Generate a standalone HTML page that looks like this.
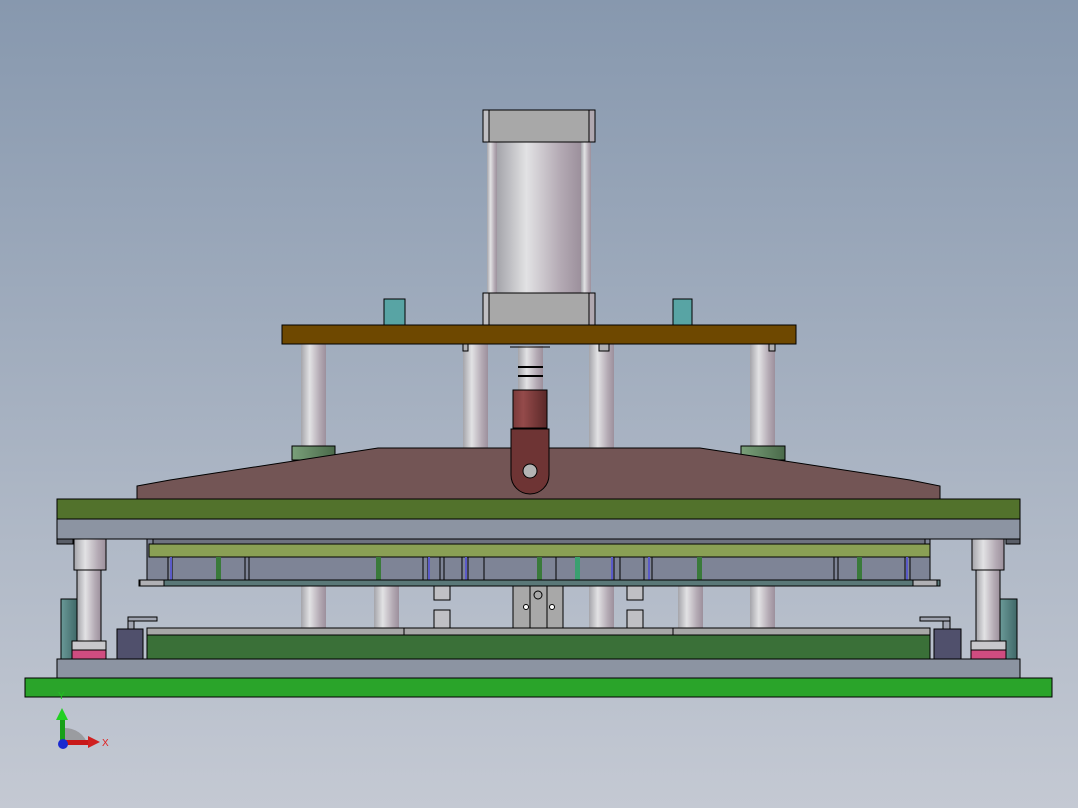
<!DOCTYPE html>
<html><head><style>html,body{margin:0;padding:0;width:1078px;height:808px;overflow:hidden}</style></head>
<body>
<svg width="1078" height="808" viewBox="0 0 1078 808" xmlns="http://www.w3.org/2000/svg" font-family="Liberation Sans, sans-serif">
<defs>
<linearGradient id="bg" x1="0" y1="0" x2="0" y2="1">
<stop offset="0" stop-color="#8798ae"/><stop offset="1" stop-color="#c4c9d3"/></linearGradient>
<linearGradient id="col" x1="0" y1="0" x2="1" y2="0">
<stop offset="0" stop-color="#a4a4aa"/><stop offset="0.35" stop-color="#e2e2e4"/><stop offset="0.75" stop-color="#b4aab4"/><stop offset="1" stop-color="#9c909c"/></linearGradient>
<linearGradient id="red" x1="0" y1="0" x2="1" y2="0">
<stop offset="0" stop-color="#7a3a3a"/><stop offset="0.3" stop-color="#944a4a"/><stop offset="1" stop-color="#5a2828"/></linearGradient>
<linearGradient id="gb" x1="0" y1="0" x2="1" y2="0">
<stop offset="0" stop-color="#7aa07a"/><stop offset="1" stop-color="#4a6a4a"/></linearGradient>
<linearGradient id="tl" x1="0" y1="0" x2="1" y2="0">
<stop offset="0" stop-color="#6a9a98"/><stop offset="1" stop-color="#406868"/></linearGradient>
</defs>
<rect width="1078" height="808" fill="url(#bg)"/>
<g stroke="#000" stroke-width="1">
<rect x="301" y="344" width="25" height="110" fill="url(#col)" stroke="none"/>
<rect x="463" y="344" width="25" height="110" fill="url(#col)" stroke="none"/>
<rect x="589" y="344" width="25" height="110" fill="url(#col)" stroke="none"/>
<rect x="750" y="344" width="25" height="110" fill="url(#col)" stroke="none"/>
<rect x="487" y="142" width="10" height="151" fill="url(#col)" stroke="none"/>
<rect x="581" y="142" width="10" height="151" fill="url(#col)" stroke="none"/>
<rect x="497" y="142" width="84" height="151" fill="url(#col)" stroke="none"/>
<rect x="483" y="110" width="112" height="32" fill="#a8a8a8"/>
<rect x="483" y="110" width="6" height="32" fill="#c0c0c4"/>
<rect x="589" y="110" width="6" height="32" fill="#b0a8b0"/>
<rect x="483" y="293" width="112" height="32" fill="#a8a8a8"/>
<rect x="483" y="293" width="6" height="32" fill="#c0c0c4"/>
<rect x="589" y="293" width="6" height="32" fill="#b0a8b0"/>
<rect x="384" y="299" width="21" height="26" fill="#58a4a4"/>
<rect x="673" y="299" width="19" height="26" fill="#58a4a4"/>
<rect x="518" y="346" width="25" height="44" fill="url(#col)" stroke="none"/>
<line x1="510" y1="347" x2="550" y2="347"/>
<line x1="518" y1="367" x2="543" y2="367" stroke-width="2"/>
<line x1="518" y1="376" x2="543" y2="376" stroke-width="2"/>
<rect x="513" y="390" width="34" height="38" fill="url(#red)"/>
<rect x="282" y="325" width="514" height="19" fill="#6e4800"/>
<rect x="463" y="344" width="5" height="7" fill="#b0b0b4"/>
<rect x="599" y="344" width="10" height="7" fill="#b0b0b4"/>
<rect x="769" y="344" width="6" height="7" fill="#b0b0b4"/>
<rect x="292" y="446" width="43" height="14" fill="url(#gb)"/>
<rect x="741" y="446" width="44" height="14" fill="url(#gb)"/>
<polygon points="137,486 170,480 378,448 700,448 910,480 940,486 940,499 137,499" fill="#735555"/>
<path d="M511,429 H549 V475 A19,19 0 0 1 511,475 Z" fill="#6e3434"/>
<circle cx="530" cy="471" r="7" fill="#b4b4b4"/>
<g stroke="none">
<rect x="301" y="586" width="25" height="42" fill="url(#col)"/>
<rect x="374" y="586" width="25" height="42" fill="url(#col)"/>
<rect x="589" y="586" width="25" height="42" fill="url(#col)"/>
<rect x="678" y="586" width="25" height="42" fill="url(#col)"/>
<rect x="750" y="586" width="25" height="42" fill="url(#col)"/>
</g>
<rect x="61" y="599" width="16" height="60" fill="url(#tl)"/>
<rect x="1000" y="599" width="17" height="60" fill="url(#tl)"/>
<rect x="77" y="570" width="24" height="71" fill="url(#col)"/>
<rect x="74" y="539" width="32" height="31" fill="url(#col)"/>
<rect x="72" y="641" width="34" height="9" fill="#c8c8cc"/>
<rect x="72" y="650" width="34" height="9" fill="#d04c80"/>
<rect x="976" y="570" width="24" height="71" fill="url(#col)"/>
<rect x="972" y="539" width="32" height="31" fill="url(#col)"/>
<rect x="971" y="641" width="35" height="9" fill="#c8c8cc"/>
<rect x="971" y="650" width="35" height="9" fill="#d04c80"/>
<rect x="128" y="617" width="29" height="4" fill="#a0a4b0"/>
<rect x="128" y="621" width="6" height="8" fill="#a0a4b0"/>
<rect x="117" y="629" width="26" height="30" fill="#50506c"/>
<rect x="920" y="617" width="30" height="4" fill="#a0a4b0"/>
<rect x="943" y="621" width="7" height="8" fill="#a0a4b0"/>
<rect x="934" y="629" width="27" height="30" fill="#50506c"/>
<rect x="57" y="499" width="963" height="20" fill="#52722c"/>
<rect x="57" y="519" width="963" height="20" fill="#8c94a2"/>
<rect x="57" y="539" width="16" height="5" fill="#5a5e68"/>
<rect x="1006" y="539" width="14" height="5" fill="#5a5e68"/>
<rect x="147" y="539" width="783" height="46" fill="#7e8496"/>
<rect x="153" y="539" width="772" height="5" fill="#6e7280"/>
<rect x="149" y="544" width="781" height="13" fill="#8aa055"/>
</g>
<g stroke="#000" stroke-width="1" fill="none">
<path d="M168 557V580M172 557V580M245 557V580M249 557V580M423 557V580M428 557V580M440 557V580M444 557V580M462 557V580M468 557V580M484 557V580M556 557V580M614 557V580M620 557V580M644 557V580M652 557V580M834 557V580M838 557V580M905 557V580M910 557V580"/>
</g>
<g stroke="none">
<rect x="216" y="557" width="5" height="23" fill="#3a7a3a"/>
<rect x="376" y="557" width="5" height="23" fill="#3a7a3a"/>
<rect x="537" y="557" width="5" height="23" fill="#3a7a3a"/>
<rect x="575" y="557" width="5" height="23" fill="#3aa070"/>
<rect x="697" y="557" width="5" height="23" fill="#3a7a3a"/>
<rect x="857" y="557" width="5" height="23" fill="#3a7a3a"/>
<rect x="170" y="557" width="2" height="23" fill="#5a5ac8"/>
<rect x="428" y="557" width="2" height="23" fill="#5a5ac8"/>
<rect x="465" y="557" width="2" height="23" fill="#5a5ac8"/>
<rect x="611" y="557" width="2" height="23" fill="#5a5ac8"/>
<rect x="648" y="557" width="2" height="23" fill="#5a5ac8"/>
<rect x="906" y="557" width="2" height="23" fill="#5a5ac8"/>
</g>
<g stroke="#000" stroke-width="1">
<rect x="139" y="580" width="801" height="6" fill="#5a7878"/>
<rect x="140" y="580" width="24" height="6" fill="#b0b0b4"/>
<rect x="913" y="580" width="24" height="6" fill="#b0b0b4"/>
<rect x="513" y="586" width="50" height="42" fill="#a8a8a8"/>
<line x1="530" y1="586" x2="530" y2="628"/><line x1="547" y1="586" x2="547" y2="628"/>
<circle cx="538" cy="595" r="4" fill="none"/><circle cx="526" cy="607" r="2.5" fill="#fff"/><circle cx="552" cy="607" r="2.5" fill="#fff"/>
<rect x="434" y="586" width="16" height="14" fill="#c0c0c4"/>
<rect x="434" y="610" width="16" height="18" fill="#c0c0c4"/>
<rect x="627" y="586" width="16" height="14" fill="#c0c0c4"/>
<rect x="627" y="610" width="16" height="18" fill="#c0c0c4"/>
<rect x="147" y="628" width="783" height="7" fill="#a8a8a8"/>
<line x1="404" y1="628" x2="404" y2="635"/><line x1="673" y1="628" x2="673" y2="635"/>
<rect x="147" y="635" width="783" height="24" fill="#3a7038"/>
<rect x="57" y="659" width="963" height="19" fill="#8c94a2"/>
<rect x="25" y="678" width="1027" height="19" fill="#2aa42a"/>
</g>
<path d="M64,745 L64,728 A24,24 0 0 1 88,745 Z" fill="#8a8a8c" opacity="0.7"/>
<rect x="60" y="718" width="5" height="27" fill="#18a018"/>
<polygon points="56,720 62,708 68,720" fill="#22d022"/>
<rect x="64" y="740" width="25" height="5" fill="#c81818"/>
<polygon points="88,736 100,742 88,748" fill="#d02020"/>
<circle cx="63" cy="744" r="5" fill="#1a2ad0"/>
<text x="58" y="699" font-size="10" fill="#22c022">Y</text>
<text x="102" y="746" font-size="10" fill="#e02020">X</text>
</svg>
</body></html>
